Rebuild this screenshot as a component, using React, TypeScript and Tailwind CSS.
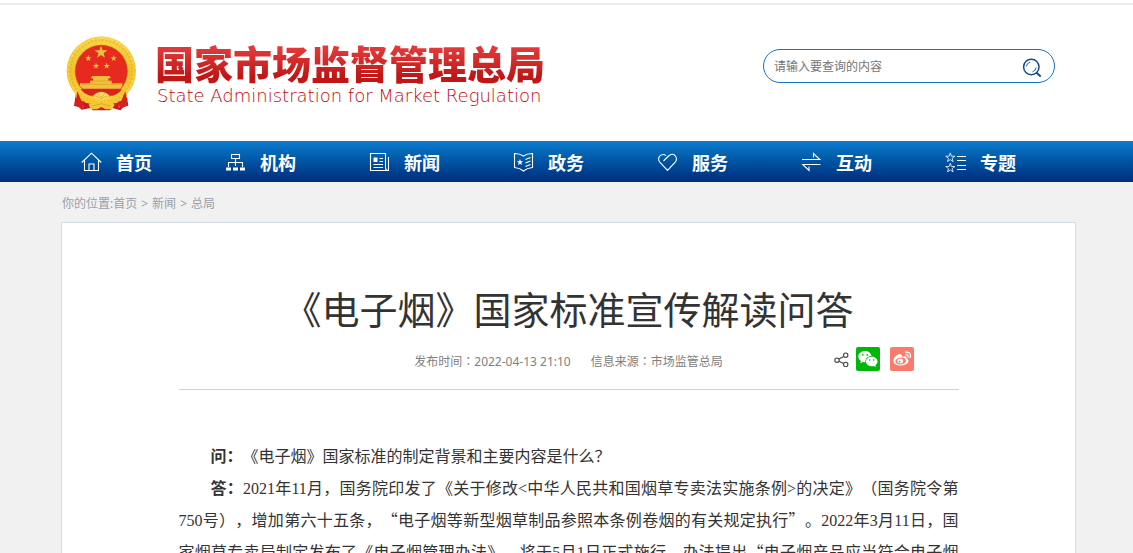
import type { ReactNode } from "react";

const star = (cx: number, cy: number, r: number) =>
  Array.from({ length: 10 }, (_, i) => {
    const radius = i % 2 ? r * 0.4 : r;
    const angle = (Math.PI / 5) * i - Math.PI / 2;
    return `${(cx + radius * Math.cos(angle)).toFixed(2)},${(cy + radius * Math.sin(angle)).toFixed(2)}`;
  }).join(" ");

function Emblem() {
  return (
    <svg viewBox="50 30 213 225" className="h-[75px] w-[71px] shrink-0" aria-hidden="true">
      <defs>
        <linearGradient id="gold" x1="0" y1="0" x2="0" y2="1">
          <stop offset="0" stopColor="#f9d548" />
          <stop offset="0.5" stopColor="#f3c22e" />
          <stop offset="1" stopColor="#fbd23c" />
        </linearGradient>
      </defs>
      <path d="M82 188 L74 240 L90 243 L96 251 L124 246 L130 253 L182 253 L188 246 L214 253 L220 243 L237 239 L229 188 Z" fill="#c81a1c" />
      <path d="M92 200 L86 238 M104 206 L100 246 M218 200 L225 238 M206 206 L210 246" stroke="#ee4a3c" strokeWidth="4" />
      <circle cx="156" cy="135" r="104" fill="url(#gold)" />
      <circle cx="156" cy="135" r="93" fill="none" stroke="#dca11c" strokeWidth="7" strokeDasharray="5 6" opacity="0.4" />
      <circle cx="156" cy="135" r="98" fill="none" stroke="#fbe27c" strokeWidth="4" strokeDasharray="7 7" opacity="0.6" />
      <circle cx="156" cy="136" r="80" fill="#c8901a" />
      <circle cx="156" cy="136" r="78" fill="#e62a20" />
      <g fill="#f3c03c">
        <polygon points={star(155, 79, 20)} />
        <polygon points={star(117, 97, 10)} />
        <polygon points={star(193, 97, 10)} />
        <polygon points={star(140, 120, 10)} />
        <polygon points={star(172, 120, 10)} />
        <path d="M129 150 h52 l4 7 h-8 v7 h10 v8 h32 v8 l-6 8 H100 l-8 -8 v-8 h30 v-8 h9 v-7 h-7 Z" />
      </g>
      <path d="M126 165 h60 M96 175 h120" stroke="#d89a22" strokeWidth="2" />
      <path d="M94 190 H218 Q206 206 190 209 L172 203 L156 198 L138 204 L122 209 Q104 204 94 190 Z" fill="#d9241e" />
      <path d="M84 194 Q96 222 134 222 L128 232 Q94 234 78 212 Z M228 194 Q216 222 178 222 L184 232 Q218 234 234 212 Z" fill="#f6c433" />
      <path d="M132 209 Q140 198 156 197 Q172 198 180 209 Q176 219 156 220 Q136 219 132 209 Z" fill="#fbdc62" />
      <path d="M118 236 Q134 220 156 232 Q178 220 196 236 L188 250 H168 L156 243 L144 250 H124 Z" fill="#f6c735" />
      <path d="M144 201 L156 214 L168 201 M137 210 L156 217 L175 210 M130 240 L156 233 L182 240" fill="none" stroke="#d89a22" strokeWidth="2" />
      <path d="M84 196 L96 224 L108 228 L96 248 L78 238 Z M228 196 L216 224 L204 228 L216 248 L234 238 Z" fill="#d71e20" />
    </svg>
  );
}

function NavIcon({ children }: { children: ReactNode }) {
  return (
    <svg viewBox="0 0 21 20" className="h-5 w-[21px]" fill="none" stroke="#fff" strokeWidth="1.1" aria-hidden="true">
      {children}
    </svg>
  );
}

const navItems: { label: string; icon: ReactNode }[] = [
  {
    label: "首页",
    icon: <path d="M.7 10.5 L10.5 1.2 L20.3 10.5 M3.5 8.5 V18.5 H17.5 V8.5 M8 18.5 V12 H13 V18.5" />,
  },
  {
    label: "机构",
    icon: (
      <>
        <path d="M6.5 2.5 h8 v4 h-8 Z M10.5 6.5 V14 M3.5 15 V10.5 H17.5 V15" />
        <path d="M1 15.5 h5 v3 h-5 Z M8 15.5 h5 v3 h-5 Z M15 15.5 h5 v3 h-5 Z" fill="#fff" stroke="none" />
      </>
    ),
  },
  {
    label: "新闻",
    icon: (
      <>
        <path d="M16.5 15.5 V1.5 H1.5 V18.5 H19.5 V5 M16.5 15 Q16.5 18.5 18.5 18.5 M10.5 6.5 H14 M10.5 9.5 H14 M4.5 12.5 H14 M4.5 15.5 H14" />
        <path d="M4.5 5.5 h4 v4.5 h-4 Z" fill="#fff" stroke="none" />
      </>
    ),
  },
  {
    label: "政务",
    icon: (
      <>
        <path d="M1.5 1.5 Q7 1.5 10.5 4 Q14 1.5 19.5 1.5 V15.5 Q14 16 10.5 19 Q7 16 1.5 15.5 Z M12.5 7.5 L17.5 5.5 M12.5 11 L17.5 9 M12.5 14.5 L17.5 12.5" />
        <polygon points={star(7, 10.3, 3.4)} fill="#fff" stroke="none" />
      </>
    ),
  },
  {
    label: "服务",
    icon: <path d="M6.5 9 L11.5 4 Q15 .7 18 3.5 Q21 7 18 10.5 L10.5 18.5 L3 10.5 Q0 7 3 3.8 Q6 1.2 9 3.6" />,
  },
  {
    label: "互动",
    icon: <path d="M1 7.5 H18.8 L12.5 1.5 V5.5 M19.5 12.5 H1.7 L8 18.5 V14.5" />,
  },
  {
    label: "专题",
    icon: (
      <>
        <polygon points={star(5.3, 5.7, 4.8)} strokeWidth="0.8" />
        <polygon points={star(5.3, 16, 4.8)} strokeWidth="0.8" />
        <path d="M12 4.5 H21 M12 8.5 H21 M12 13.5 H21 M12 17.5 H21" />
      </>
    ),
  },
];

function SearchIcon() {
  return (
    <svg viewBox="0 0 20 20" className="h-5 w-5" fill="none" stroke="#124a93" aria-hidden="true">
      <circle cx="9.3" cy="9" r="7.7" strokeWidth="1.5" />
      <path d="M14.3 14.5 L18.7 18.5" strokeWidth="1.9" />
      <path d="M4.3 8.5 Q5 5 8 4.1 M10.5 13.8 Q13.5 13 14.2 9.5" strokeWidth="0.9" />
    </svg>
  );
}

function Colon() {
  return (
    <span lang="zh-TW" className="font-['Noto_Sans_CJK_TC',sans-serif] leading-none">
      ：
    </span>
  );
}

function Quote({ children }: { children: ReactNode }) {
  return <span className="font-['Noto_Sans_CJK_SC',sans-serif] leading-none">{children}</span>;
}

export default function App() {
  return (
    <div
      lang="zh-CN"
      className="min-h-screen bg-[#f1f1f1] font-['Noto_Sans','Noto_Sans_CJK_SC',sans-serif] text-[#333] [text-spacing-trim:space-all]"
    >
      <header className="bg-white pt-[3px]">
        <div className="border-t-2 border-[#ececec] pl-1">
          <div className="mx-auto flex h-[136px] max-w-[1015px] items-start justify-between">
            <a href="#" className="flex gap-[18px] pt-[31px] pl-[5px]" aria-label="国家市场监督管理总局">
              <Emblem />
              <span className="flex flex-col pt-0.5">
                <span className="bg-linear-to-b from-[#e23a3a] from-20% to-[#c01616] to-80% bg-clip-text font-['Noto_Sans_CJK_SC',sans-serif] text-[39px] leading-[48px] font-black text-transparent">
                  国家市场监督管理总局
                </span>
                <span className="pl-0.5 font-['DejaVu_Sans',sans-serif] text-lg leading-5 font-extralight text-[#c4080a]">
                  State Administration for Market Regulation
                </span>
              </span>
            </a>
            <form
              role="search"
              onSubmit={(e) => e.preventDefault()}
              className="mt-11 mr-[21px] flex h-[34px] w-[292px] items-center rounded-full border border-[#1274c5] pr-3 pl-2.5"
            >
              <input
                type="text"
                aria-label="请输入要查询的内容"
                placeholder="请输入要查询的内容"
                className="min-w-0 flex-1 bg-transparent pt-0.5 text-xs outline-none placeholder:text-[#757575]"
              />
              <button type="submit" aria-label="搜索" className="pt-1">
                <SearchIcon />
              </button>
            </form>
          </div>
        </div>
      </header>

      <nav className="bg-linear-to-b from-[#0f7ccd] to-[#002c7c] pl-1">
        <ul className="mx-auto flex max-w-[1015px]">
          {navItems.map((item) => (
            <li key={item.label} className="w-36">
              <a href="#" className="flex h-[41px] items-center gap-3.5 pl-5 text-lg font-bold text-white">
                <NavIcon>{item.icon}</NavIcon>
                <span className="pt-0.5">{item.label}</span>
              </a>
            </li>
          ))}
        </ul>
      </nav>

      <main className="pl-1">
        <div className="mx-auto max-w-[1015px]">
          <div className="flex h-10 items-center pt-1 pl-px text-xs text-[#9a9fad]">
            你的位置:
            <a href="#">首页</a>
            <span className="px-1">&gt;</span>
            <a href="#">新闻</a>
            <span className="px-1">&gt;</span>
            <a href="#">总局</a>
          </div>

          <article className="border border-[#d3dbe3] bg-white pt-[58px] pb-16">
            <div className="mx-auto max-w-[780px]">
              <h1 className="text-center text-[38px] leading-[56px]">《电子烟》国家标准宣传解读问答</h1>

              <div className="grid h-[53px] grid-cols-[1fr_auto_1fr] items-start border-b border-[#d0d0d0]">
                <div />
                <div className="flex gap-5 pt-[15px] text-xs leading-5 text-[#808080]">
                  <span>发布时间<Colon />2022-04-13 21:10</span>
                  <span>信息来源<Colon />市场监管总局</span>
                </div>
                <div className="flex items-center justify-end pt-2.5 pr-[45px]">
                  <svg viewBox="0 0 15 16" className="mr-[7px] h-4 w-[15px]" fill="none" stroke="#444" strokeWidth="1.1" aria-hidden="true">
                    <circle cx="3" cy="9.2" r="2.2" />
                    <circle cx="11.7" cy="4.2" r="2.2" />
                    <circle cx="11.7" cy="13.5" r="2.2" />
                    <path d="M5 8 L9.7 5.4 M5 10.3 L9.7 12.6" />
                  </svg>
                  <a href="#" aria-label="微信" className="mr-2.5">
                    <svg viewBox="0 0 24 24" className="size-6">
                      <rect width="24" height="24" rx="2" fill="#03b60c" />
                      <path d="M9 4 C5 4 2.3 6.6 2.3 9.6 C2.3 11.5 3.3 13 4.9 14.1 L4.3 16.2 L6.7 14.9 Q8 15.3 9.5 15.2 C9 11.6 12 9.1 15.6 9.1 C15 6 12.3 4 9 4 Z" fill="#fff" />
                      <path d="M15.6 9.8 C12.4 9.8 10 11.9 10 14.5 C10 17.2 12.5 19.2 15.6 19.2 Q16.8 19.2 17.8 18.9 L19.9 20 L19.4 18.2 C20.7 17.3 21.5 16 21.5 14.5 C21.5 11.9 18.8 9.8 15.6 9.8 Z" fill="#fff" />
                      <g fill="#03b60c">
                        <circle cx="6.8" cy="7.8" r="0.9" />
                        <circle cx="11.3" cy="7.8" r="0.9" />
                        <circle cx="13.7" cy="13" r="0.8" />
                        <circle cx="17.6" cy="13" r="0.8" />
                      </g>
                    </svg>
                  </a>
                  <a href="#" aria-label="微博">
                    <svg viewBox="0 0 24 24" className="size-6">
                      <rect width="24" height="24" rx="2" fill="#f97b6b" />
                      <path d="M10.5 7.2 C8 6.3 3.4 10.5 3.4 14 C3.4 17 7 18.6 10.8 18.6 C15.3 18.6 18.5 16 18.5 13.8 C18.5 12.3 17.4 11.6 16.4 11.2 C16.9 9.4 15.6 8.5 12 9.9 C12.2 8.5 11.8 7.6 10.5 7.2 Z" fill="#fff" />
                      <ellipse cx="10.7" cy="14" rx="5.3" ry="3.5" fill="#f97b6b" transform="rotate(-8 10.7 14)" />
                      <ellipse cx="10.2" cy="14.1" rx="3" ry="2.5" fill="#fff" />
                      <circle cx="9.5" cy="14.7" r="1" fill="#f97b6b" />
                      <path d="M15.5 5.2 Q19.5 4.4 20.4 8 Q20.6 9.3 20.1 10.5 M15.9 7.7 Q18.3 7.5 18 10" fill="none" stroke="#fff" strokeWidth="1.3" strokeLinecap="round" />
                    </svg>
                  </a>
                </div>
              </div>

              <div className="mt-[51px] text-justify indent-8 font-['Liberation_Serif','Noto_Sans_CJK_SC',sans-serif] text-base leading-8">
                <p>
                  <strong>问：</strong>《电子烟》国家标准的制定背景和主要内容是什么？
                </p>
                <p>
                  <strong>答：</strong>2021年11月，国务院印发了《关于修改&lt;中华人民共和国烟草专卖法实施条例&gt;的决定》（国务院令第750号），增加第六十五条，<Quote>“</Quote>电子烟等新型烟草制品参照本条例卷烟的有关规定执行<Quote>”</Quote>。2022年3月11日，国家烟草专卖局制定发布了《电子烟管理办法》，将于5月1日正式施行，办法提出<Quote>“</Quote>电子烟产品应当符合电子烟强制性国家标准<Quote>”</Quote>。
                </p>
              </div>
            </div>
          </article>
        </div>
      </main>
    </div>
  );
}
